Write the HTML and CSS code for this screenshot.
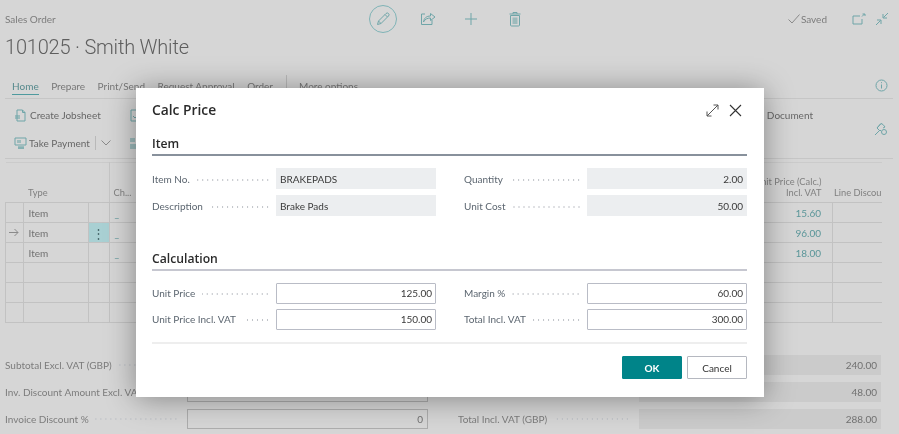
FILE: index.html
```html
<!DOCTYPE html>
<html lang="en">
<head>
<meta charset="utf-8">
<title>Calc Price</title>
<link rel="stylesheet" href="styles.css">
</head>
<body>
<div class="page">
  <header class="head">
    <div class="head-left">
      <div class="crumb">Sales Order</div>
      <h1 class="doc-title">101025 · Smith White</h1>
    </div>
    <div class="head-center">
      <span class="edit-circle">
        <svg width="16" height="16" viewBox="0 0 16 16" class="ic"><path d="M2.5 13.5l1-3.5 7.5-7.5a1.4 1.4 0 0 1 2.5 2.5L6 12.5z M3.5 10l2.5 2.5 M10 3.5l2.5 2.5"/></svg>
      </span>
      <svg width="20" height="20" viewBox="0 0 20 20" class="ic ic-btn"><path d="M8 5H4.500v10.500H15V11 M6.500 13c.5-4 3-6 7-6V4.500L18 8l-4.500 3.500V9c-3 0-5.500 1-7 4z"/></svg>
      <svg width="20" height="20" viewBox="0 0 20 20" class="ic ic-btn"><path d="M10 4v12 M4 10h12"/></svg>
      <svg width="20" height="20" viewBox="0 0 20 20" class="ic ic-btn"><path d="M5.500 6.500h9V16a1 1 0 0 1-1 1h-7a1 1 0 0 1-1-1z M4.500 5h11 M8 5V3.500h4V5"/><path class="ic-fill" d="M7.500 8.500h5v6.500h-5z"/></svg>
    </div>
    <div class="head-right">
      <span class="saved">
        <svg width="12" height="10" viewBox="0 0 12 10" class="ic ic-grey"><path d="M.5 5.500L4 9l7.500-8.500"/></svg>
        Saved
      </span>
      <svg width="14" height="12" viewBox="0 0 14 12" class="ic"><path d="M8 3H1v8h9V6 M10 3.500l2.500-2.500 M10.500 1H13v2"/></svg>
      <svg width="14" height="14" viewBox="0 0 14 14" class="ic"><path d="M1 13l4.500-4.500 M2 8h4v4 M13 1L8.500 5.500 M12 6H8V2"/></svg>
    </div>
  </header>

  <nav class="tabs">
    <span class="tab tab-active">Home</span>
    <span class="tab">Prepare</span>
    <span class="tab">Print/Send</span>
    <span class="tab">Request Approval</span>
    <span class="tab">Order</span>
    <span class="tab-sep"></span>
    <span class="tab">More options</span>
    <svg width="13" height="13" viewBox="0 0 13 13" class="ic info"><circle cx="6.500" cy="6.500" r="5.500"/><path d="M6.500 5.500v4 M6.500 3.200v1"/></svg>
  </nav>

  <section class="actions">
    <div class="action-rows">
      <div class="action-row">
        <span class="action">
          <svg width="12" height="13" viewBox="0 0 12 13" class="ic"><path d="M3 1h5.500L11 3.500V12H3z M8.500 1v2.500H11"/><path class="ic-fill" d="M1 6h5v4H1z"/></svg>
          Create Jobsheet
        </span>
        <span class="action action-second">
          <svg width="12" height="13" viewBox="0 0 12 13" class="ic"><path d="M2 1h6l3 3v8H2z M4 7l2 2 3-3"/></svg>
        </span>
        <span class="action action-end">Document</span>
      </div>
      <div class="action-row">
        <span class="action action-tight">
          <svg width="13" height="13" viewBox="0 0 13 13" class="ic"><path d="M1 1h11v7H1z M4 11h6"/><path class="ic-fill" d="M3 3h4v3H3z M4 9h6v3H4z"/></svg>
          Take Payment
        </span>
        <span class="split"></span>
        <svg width="10" height="6" viewBox="0 0 10 6" class="ic ic-grey"><path d="M.5.500L5 5 9.500.500"/></svg>
        <span class="action action-third">
          <svg width="12" height="13" viewBox="0 0 12 13" class="ic"><path class="ic-fill" d="M1 1h5v4H1z M1 7h10v5H1z"/></svg>
        </span>
      </div>
    </div>
    <svg width="14" height="14" viewBox="0 0 14 14" class="ic pin"><path d="M1 13l4-4 M3 6l4-4.500 2 1L11 5 9 6 M3 6l3 3 M7 1.500l-4 4.500 M6 9l1-1"/><circle cx="10" cy="10" r="2.500"/></svg>
  </section>

  <table class="lines">
    <colgroup>
      <col class="c-sel"><col class="c-type"><col class="c-dots"><col class="c-ch"><col class="c-mid"><col class="c-price"><col class="c-disc">
    </colgroup>
    <thead>
      <tr>
        <th></th>
        <th class="th-type">Type</th>
        <th></th>
        <th class="th-ch">Ch...</th>
        <th></th>
        <th class="num">Unit Price (Calc.)<br>Incl. VAT</th>
        <th class="num th-disc">Line Discou</th>
      </tr>
    </thead>
    <tbody>
      <tr>
        <td></td><td>Item</td><td></td><td class="link">_</td><td></td><td class="num link">15.60</td><td></td>
      </tr>
      <tr>
        <td class="arrow"><svg width="10" height="9" viewBox="0 0 10 9" class="ic ic-grey"><path d="M0 4.500h9 M5.500 1L9 4.500 5.500 8"/></svg></td><td>Item</td><td class="row-menu">⋮</td><td class="link">_</td><td></td><td class="num link">96.00</td><td></td>
      </tr>
      <tr>
        <td></td><td>Item</td><td></td><td class="link">_</td><td></td><td class="num link">18.00</td><td></td>
      </tr>
      <tr><td></td><td></td><td></td><td></td><td></td><td></td><td></td></tr>
      <tr><td></td><td></td><td></td><td></td><td></td><td></td><td></td></tr>
      <tr><td></td><td></td><td></td><td></td><td></td><td></td><td></td></tr>
    </tbody>
  </table>

  <section class="totals">
    <div class="total">
      <span class="total-label">Subtotal Excl. VAT (GBP)</span><span class="leader"></span>
      <span class="total-field total-ro"></span>
    </div>
    <div class="total">
      <span class="total-label"></span><span class="leader"></span>
      <span class="total-field total-ro">240.00</span>
    </div>
    <div class="total">
      <span class="total-label">Inv. Discount Amount Excl. VAT</span><span class="leader"></span>
      <span class="total-field total-box"></span>
    </div>
    <div class="total">
      <span class="total-label"></span><span class="leader"></span>
      <span class="total-field total-ro">48.00</span>
    </div>
    <div class="total">
      <span class="total-label">Invoice Discount %</span><span class="leader"></span>
      <span class="total-field total-box">0</span>
    </div>
    <div class="total">
      <span class="total-label">Total Incl. VAT (GBP)</span><span class="leader"></span>
      <span class="total-field total-ro">288.00</span>
    </div>
  </section>
</div>

<div class="dialog" role="dialog" aria-label="Calc Price">
  <div class="dialog-head">
    <h2 class="dialog-title">Calc Price</h2>
    <svg width="13" height="13" viewBox="0 0 13 13" class="dlg-ic"><path d="M1 12L12 1 M7.500 1H12v4.500 M1 7.500V12h4.500"/></svg>
    <svg width="13" height="13" viewBox="0 0 13 13" class="dlg-ic dlg-close"><path d="M1 1l11 11 M12 1L1 12"/></svg>
  </div>

  <h3 class="group group-dark">Item</h3>
  <div class="fields">
    <div class="field">
      <span class="label">Item No.</span><span class="leader"></span>
      <span class="value value-ro">BRAKEPADS</span>
    </div>
    <div class="field">
      <span class="label">Quantity</span><span class="leader"></span>
      <span class="value value-ro value-num">2.00</span>
    </div>
    <div class="field">
      <span class="label">Description</span><span class="leader"></span>
      <span class="value value-ro">Brake Pads</span>
    </div>
    <div class="field">
      <span class="label">Unit Cost</span><span class="leader"></span>
      <span class="value value-ro value-num">50.00</span>
    </div>
  </div>

  <h3 class="group group-calc">Calculation</h3>
  <div class="fields fields-input">
    <div class="field">
      <span class="label">Unit Price</span><span class="leader"></span>
      <span class="value value-input value-num">125.00</span>
    </div>
    <div class="field">
      <span class="label">Margin %</span><span class="leader"></span>
      <span class="value value-input value-num">60.00</span>
    </div>
    <div class="field">
      <span class="label">Unit Price Incl. VAT</span><span class="leader"></span>
      <span class="value value-input value-num">150.00</span>
    </div>
    <div class="field">
      <span class="label">Total Incl. VAT</span><span class="leader"></span>
      <span class="value value-input value-num">300.00</span>
    </div>
  </div>

  <div class="dialog-foot">
    <button class="btn btn-ok" type="button">OK</button>
    <button class="btn btn-cancel" type="button">Cancel</button>
  </div>
</div>
</body>
</html>
```

FILE: styles.css
```css
* { box-sizing: border-box; }

html, body {
  margin: 0;
  height: 434px;
  overflow: hidden;
}

body {
  background: #d6d6d6;
  color: #666;
  font: 10px/14px Lato, "Open Sans", sans-serif;
  position: relative;
}

.ic { fill: none; stroke: #6fa5a8; stroke-width: 1; flex: none; }
.ic-grey { stroke: #8a8a8a; }
.ic-fill { fill: #6fa5a8; fill-opacity: .55; stroke: none; }

.page { width: 899px; height: 434px; overflow: hidden; filter: blur(.3px); }

/* header */
.head {
  height: 70px;
  display: grid;
  grid-template-columns: 369px 1fr auto;
}
.head-left { padding: 12px 0 0 5px; }
.crumb { line-height: 14px; color: #7c7c7c; }
.doc-title {
  margin: 6px 0 0;
  font: 300 20px/30px Roboto, Lato, sans-serif;
  letter-spacing: -.2px;
  color: #5e5e5e;
  white-space: nowrap;
}
.head-center {
  display: flex;
  align-items: center;
  align-self: start;
  height: 28px;
  margin-top: 5px;
  gap: 24px;
}
.edit-circle {
  width: 28px;
  height: 28px;
  border: 1px solid #7fb3b6;
  border-radius: 50%;
  display: flex;
  align-items: center;
  justify-content: center;
  margin-right: -4px;
}
.head-right {
  display: flex;
  align-items: center;
  align-self: start;
  height: 14px;
  margin-top: 12px;
  padding-right: 10px;
  gap: 9px;
}
.saved {
  display: flex;
  align-items: center;
  gap: 1px;
  margin-right: 16px;
  color: #7c7c7c;
}

/* tabs */
.tabs {
  height: 29px;
  margin: 0 6px 0 5px;
  padding: 9px 5px 0 7px;
  border-bottom: 1px solid #c6c6c6;
  display: flex;
  align-items: flex-start;
  gap: 12.500px;
  color: #777;
  white-space: nowrap;
}
.tab { line-height: 14px; }
.tab-active {
  color: #55898c;
  border-bottom: 1px solid #4f9a9e;
  height: 16px;
}
.tab-sep { width: 1px; height: 19px; background: #b9b9b9; margin-top: -4px; }
.info { margin-left: auto; margin-top: 0; }

/* actions */
.actions {
  height: 60px;
  margin: 0 6px 0 5px;
  border-bottom: 1px solid #c6c6c6;
  display: flex;
  padding: 9px 5px 0 9px;
  justify-content: space-between;
}
.action-rows { flex: 1; display: flex; flex-direction: column; gap: 14px; }
.action-row { display: flex; align-items: center; height: 14px; white-space: nowrap; }
.action { display: flex; align-items: center; gap: 4px; }
.action-tight { gap: 2px; }
.action-second { margin-left: 28px; }
.action-end { margin-left: auto; margin-right: 61px; }
.split { width: 1px; height: 14px; background: #b9b9b9; margin: 0 5px; }
.action-third { margin-left: 18px; }
.pin { margin-top: 14px; }

/* lines table */
.lines {
  margin: 3px 0 0 5px;
  width: 876px;
  table-layout: fixed;
  border-collapse: collapse;
  border-top: 1px solid #cbcbcb;
  color: #707070;
}
.c-sel { width: 17.500px; }
.c-type { width: 65px; }
.c-dots { width: 21px; }
.c-ch { width: 60px; }
.c-mid { width: 573.500px; }
.c-price { width: 90px; }
.c-disc { width: 49px; }
.lines th {
  height: 40px;
  padding: 0 5px 4px;
  font-weight: 400;
  font-size: 9.300px;
  line-height: 11px;
  text-align: left;
  vertical-align: bottom;
  color: #808080;
  white-space: nowrap;
  overflow: hidden;
  border-bottom: 1px solid #c2c2c2;
}
.lines th.th-ch { border-left: 1px solid #c6c6c6; padding-left: 4px; padding-bottom: 4px; }
.lines th.num { text-align: right; padding-right: 11px; }
.lines th.th-disc { padding: 0 0 4px; text-align: right; }
.lines td {
  height: 20px;
  padding: 1px 5px 0;
  border: 1px solid #c2c2c2;
  border-top: 0;
  vertical-align: middle;
  overflow: hidden;
}
.lines td:first-child { padding: 0; text-align: center; }
.lines td:last-child { border-right: 0; }
.lines .num { text-align: right; padding-right: 11px; }
.lines .link { color: #5b9699; }
.lines td.arrow { line-height: 0; }
.lines td.row-menu {
  background: #a9d0d3;
  color: #4e6e70;
  padding: 0;
  text-align: center;
  font-size: 13px;
  font-weight: 400;
}

/* totals */
.totals {
  margin: 31.500px 18px 0 5px;
  display: grid;
  grid-template-columns: 423px 423px;
  column-gap: 30px;
  row-gap: 7px;
}
.total { display: flex; align-items: center; height: 20px; white-space: nowrap; color: #7c7c7c; }
.total-label { flex: none; }
.total .leader { margin: 0 9px 0 6px; }
.total-field {
  flex: none;
  width: 242px;
  height: 20px;
  line-height: 20px;
  padding: 0 4px;
  text-align: right;
  color: #707070;
}
.total-ro { background: #cbcbcb; }
.total-box { border: 1px solid #adadad; line-height: 18px; width: 241px; }

/* leader dots */
.leader {
  flex: 1;
  min-width: 0;
  height: 2px;
  margin: 2px 6px 0 7px;
  background-image: radial-gradient(circle, #c0c3c8 .6px, transparent .9px);
  background-size: 5px 2px;
  background-position: right center;
}

/* dialog */
.dialog {
  position: absolute;
  left: 136px;
  top: 88px;
  width: 628px;
  height: 309px;
  padding: 0 17px 0 16px;
  background: #fff;
  box-shadow: 0 2px 28px rgba(0, 0, 0, .38);
  color: #333;
  filter: blur(.25px);
}
.dialog-head {
  height: 44px;
  display: flex;
  align-items: center;
  gap: 9px;
}
.dialog-title {
  margin: 0 auto 0 0;
  font: 600 13.800px/20px "Open Sans", sans-serif;
  color: #2b2b2b;
}
.dlg-ic { fill: none; stroke: #555; stroke-width: 1; }
.dlg-close { stroke: #333; stroke-width: 1.100; margin-right: 5px; margin-left: 1px; }
.group {
  margin: 0;
  height: 24px;
  padding-top: 2px;
  font: 600 12.200px/20px "Open Sans", sans-serif;
  color: #2b2b2b;
  border-bottom: 2px solid #88919c;
}
.group-calc { margin-top: 31px; border-bottom-color: #c6c7d0; }

.fields {
  margin-top: 12px;
  display: grid;
  grid-template-columns: 284px 283px;
  column-gap: 28px;
  row-gap: 6px;
}
.field { display: flex; align-items: center; height: 21px; white-space: nowrap; }
.fields-input .field { height: 20.500px; }
.fields-input { row-gap: 5.500px; }
.label { color: #5c6670; flex: none; }
.value {
  flex: none;
  width: 160px;
  height: 100%;
  padding: 0 4px;
  line-height: 22px;
  color: #3a3a3a;
}
.value-num { text-align: right; }
.value-ro { background: #eceef0; }
.value-input {
  border: 1px solid #b9bcc6;
  border-radius: 1px;
  line-height: 19px;
  padding: 0 3px;
}

.dialog-foot {
  margin-top: 12px;
  padding-top: 12.500px;
  border-top: 2px solid #eeeeee;
  display: flex;
  justify-content: flex-end;
  gap: 5px;
}
.btn {
  width: 60px;
  height: 23px;
  padding: 0;
  font: 700 10px/1 Lato, "Open Sans", sans-serif;
  border-radius: 1px;
}
.btn-ok { background: #008489; border: 1px solid #008489; color: #fff; }
.btn-cancel { background: #fff; border: 1px solid #b5b8c0; color: #333; font-weight: 400; }
```
